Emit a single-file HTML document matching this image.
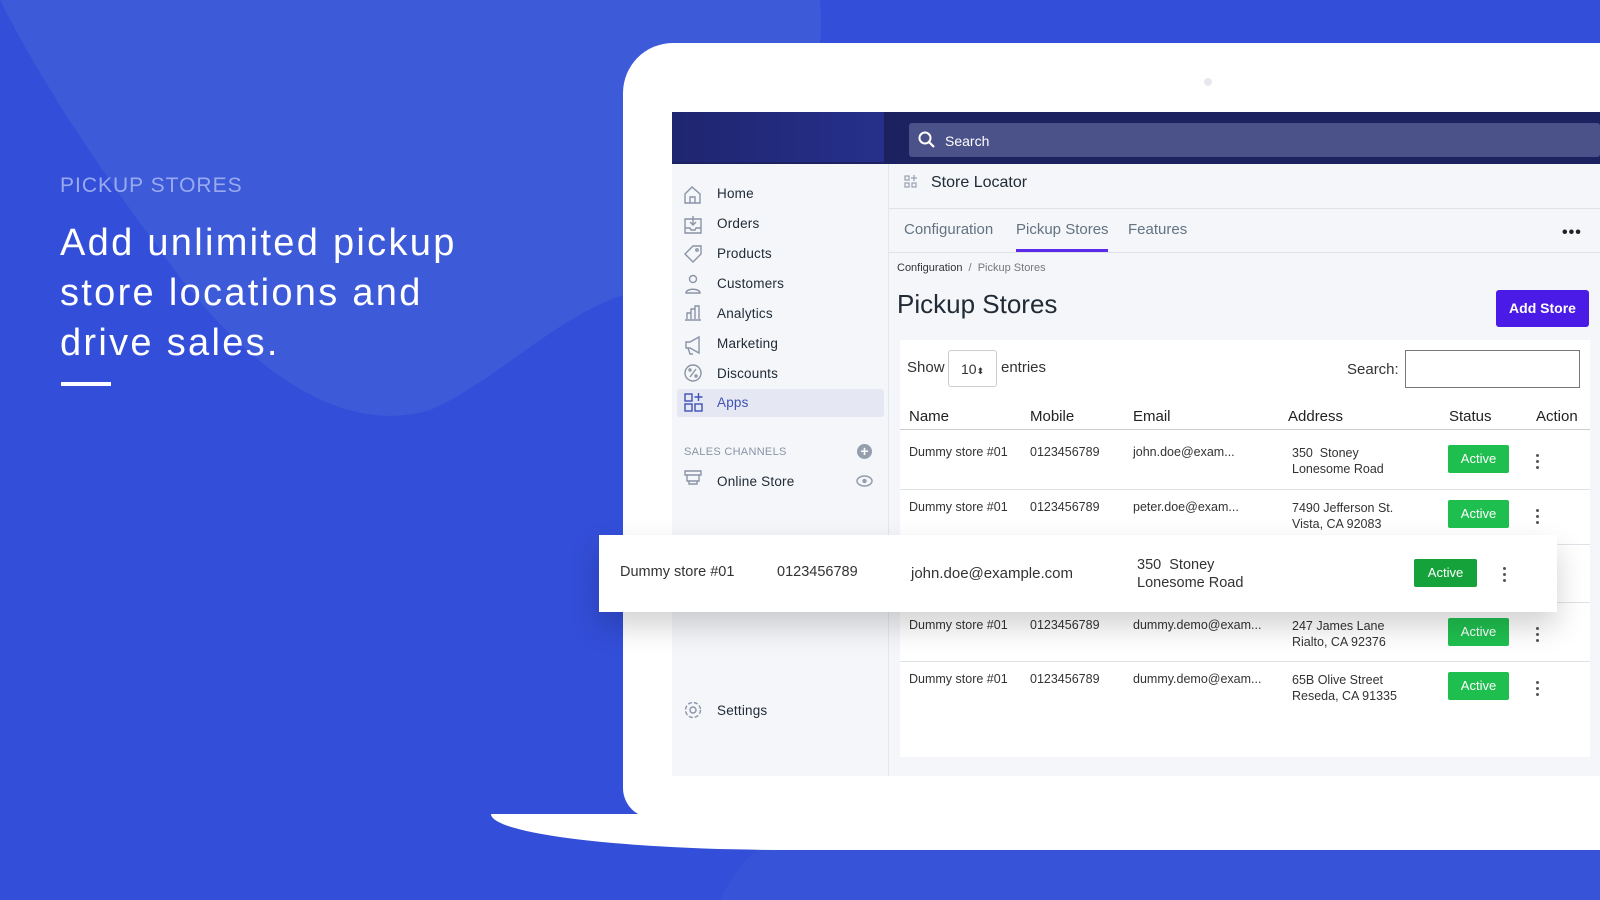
<!DOCTYPE html>
<html><head><meta charset="utf-8"><style>
*{margin:0;padding:0;box-sizing:border-box}
body{width:1600px;height:900px;overflow:hidden;background:#334ed8;font-family:"Liberation Sans",sans-serif;position:relative}
.abs{position:absolute}
.sb{font-size:13.5px;color:#212b36;letter-spacing:0.2px}
.cell{position:absolute;font-size:12.5px;color:#333}
.act{position:absolute;width:61px;height:28px;background:#1fbf4f;color:#fff;font-size:13px;text-align:center;line-height:28px;border-radius:2px}
.dots{position:absolute;width:3px}
.dots i{display:block;width:3px;height:3px;border-radius:50%;background:#555;margin-bottom:3px}
.sep{position:absolute;left:900px;width:690px;height:1px;background:#dfe3e8}
</style></head><body>
<svg class="abs" style="left:0;top:0" width="1600" height="900">
<path d="M0 0 L820 0 C830 120 760 260 640 290 C560 310 500 380 430 410 C330 440 230 350 160 250 C100 170 40 80 0 0Z" fill="#3d5ad9"/>
<path d="M720 900 C740 860 760 840 800 830 L1600 830 L1600 900Z" fill="#3a56d8" opacity="0.6"/>
</svg>
<div class="abs" style="left:60px;top:174px;font-size:21px;color:#9aaaf0;letter-spacing:1px">PICKUP STORES</div>
<div class="abs" style="left:60px;top:218px;font-size:38px;line-height:50px;color:#fff;letter-spacing:2.3px">Add unlimited pickup<br>store locations and<br>drive sales.</div>
<div class="abs" style="left:61px;top:382px;width:50px;height:4px;background:#fff"></div>
<div class="abs" style="left:491px;top:814px;width:1109px;height:36px;background:#fff;border-radius:0 0 0 300px/0 0 0 36px"></div>
<div class="abs" style="left:623px;top:43px;width:1000px;height:775px;background:#fff;border-radius:50px 0 0 30px"></div>
<div class="abs" style="left:1204px;top:78px;width:8px;height:8px;border-radius:50%;background:#e6e8ee"></div>
<div class="abs" style="left:672px;top:112px;width:928px;height:664px;background:#f4f6fa"></div>
<div class="abs" style="left:672px;top:112px;width:928px;height:52px;background:#1c2260"></div>
<div class="abs" style="left:672px;top:112px;width:212px;height:50px;background:linear-gradient(90deg,#1f2570,#26308a)"></div>
<div class="abs" style="left:909px;top:123px;width:691px;height:34px;background:#4b5189;border-radius:3px"></div>
<svg class="abs" style="left:918px;top:131px" width="18" height="18"><circle cx="7" cy="7" r="5.5" stroke="#fff" stroke-width="2" fill="none"/><path d="M11 11l5 5" stroke="#fff" stroke-width="2.2"/></svg>
<div class="abs" style="left:945px;top:133px;font-size:14px;color:#fff">Search</div>
<div class="abs" style="left:677px;top:389px;width:207px;height:28px;background:#e5e8f3;border-radius:3px"></div>
<svg class="abs" style="left:682px;top:184px" width="22" height="540" fill="none" stroke="#8a94a6" stroke-width="1.4">
<path d="M3 10L10 3L18 10V19H3Z M8 19v-6h5v6"/>
<path d="M3 35h16v14H3z M11 32v9 M8 38l3 3 3-3 M3 44h5l1 2h4l1-2h5"/>
<path d="M3 70l8-8h8v8l-8 8z"/><circle cx="15" cy="66" r="1.2"/>
<circle cx="11" cy="95" r="3.5"/><path d="M4 109c0-5 14-5 14 0z"/>
<path d="M3 136h16 M5 135v-6h4v6 M9 135v-10h4v10 M13 135v-13h4v13"/>
<path d="M4 158h4l9-5v16l-9-5H4z M6 164l2 6h3"/>
<circle cx="11" cy="189" r="8"/><path d="M8 193l6-8"/><circle cx="8" cy="186" r="1"/><circle cx="14" cy="192" r="1"/>
<g stroke="#3f51b5"><rect x="3" y="210" width="7" height="7"/><rect x="3" y="220" width="7" height="7"/><rect x="13" y="220" width="7" height="7"/><path d="M16.5 209v8 M12.5 213h8"/></g>
<path d="M3 287h16v4H3z M5 291v6h12v-6 M7 297v3h8v-3"/>
<circle cx="11" cy="526" r="3"/><circle cx="11" cy="526" r="7.5" stroke-dasharray="4 2"/>
</svg>
<div class="abs sb" style="left:717px;top:186px">Home</div>
<div class="abs sb" style="left:717px;top:216px">Orders</div>
<div class="abs sb" style="left:717px;top:246px">Products</div>
<div class="abs sb" style="left:717px;top:276px">Customers</div>
<div class="abs sb" style="left:717px;top:306px">Analytics</div>
<div class="abs sb" style="left:717px;top:336px">Marketing</div>
<div class="abs sb" style="left:717px;top:366px">Discounts</div>
<div class="abs sb" style="left:717px;top:395px;color:#3f51b5">Apps</div>
<div class="abs" style="left:684px;top:446px;font-size:11px;color:#8a94a6;letter-spacing:0.3px">SALES CHANNELS</div>
<div class="abs" style="left:857px;top:444px;width:15px;height:15px;border-radius:50%;background:#959eae;color:#fff;font-size:14px;line-height:15px;text-align:center;font-weight:bold">+</div>
<div class="abs sb" style="left:717px;top:474px">Online Store</div>
<svg class="abs" style="left:856px;top:475px" width="17" height="12"><ellipse cx="8.5" cy="6" rx="7.5" ry="5" fill="none" stroke="#959eae" stroke-width="1.5"/><circle cx="8.5" cy="6" r="2.2" fill="#959eae"/></svg>
<div class="abs sb" style="left:717px;top:703px">Settings</div>
<div class="abs" style="left:888px;top:164px;width:1px;height:612px;background:#e3e6ec"></div>
<svg class="abs" style="left:904px;top:175px" width="14" height="14" fill="none" stroke="#98a0b0" stroke-width="1.2"><rect x="1" y="1" width="4" height="4"/><rect x="1" y="8" width="4" height="4"/><rect x="8" y="8" width="4" height="4"/><path d="M10 0v6M7 3h6"/></svg>
<div class="abs" style="left:931px;top:174px;font-size:16px;color:#212b36">Store Locator</div>
<div class="abs" style="left:889px;top:208px;width:711px;height:1px;background:#dfe3e8"></div>
<div class="abs" style="left:904px;top:221px;font-size:15px;color:#637381">Configuration</div>
<div class="abs" style="left:1016px;top:221px;font-size:15px;color:#637381">Pickup Stores</div>
<div class="abs" style="left:1128px;top:221px;font-size:15px;color:#637381">Features</div>
<div class="abs" style="left:1016px;top:249px;width:92px;height:3px;background:#5c2ae8"></div>
<div class="abs" style="left:889px;top:252px;width:711px;height:1px;background:#dfe3e8"></div>
<div class="abs" style="left:1562px;top:224px;font-size:16px;font-weight:bold;color:#222;letter-spacing:1px">•••</div>
<div class="abs" style="left:897px;top:262px;font-size:11px;color:#333">Configuration <span style="color:#777">&nbsp;/&nbsp; Pickup Stores</span></div>
<div class="abs" style="left:897px;top:289px;font-size:26px;color:#212b36">Pickup Stores</div>
<div class="abs" style="left:1496px;top:290px;width:93px;height:37px;background:#4a1ae6;border-radius:3px;color:#fff;font-size:14px;font-weight:bold;text-align:center;line-height:37px">Add Store</div>
<div class="abs" style="left:900px;top:340px;width:690px;height:417px;background:#fff"></div>
<div class="abs" style="left:907px;top:359px;font-size:15px;color:#333">Show</div>
<div class="abs" style="left:948px;top:350px;width:49px;height:37px;border:1px solid #ccc;border-radius:3px;font-size:14px;color:#333;line-height:36px;padding-left:12px">10<span style="font-size:9px">⬍</span></div>
<div class="abs" style="left:1001px;top:359px;font-size:15px;color:#333">entries</div>
<div class="abs" style="left:1347px;top:361px;font-size:15px;color:#333">Search:</div>
<div class="abs" style="left:1405px;top:350px;width:175px;height:38px;border:1px solid #777"></div>
<div class="abs" style="left:909px;top:408px;font-size:15px;color:#222">Name</div>
<div class="abs" style="left:1030px;top:408px;font-size:15px;color:#222">Mobile</div>
<div class="abs" style="left:1133px;top:408px;font-size:15px;color:#222">Email</div>
<div class="abs" style="left:1288px;top:408px;font-size:15px;color:#222">Address</div>
<div class="abs" style="left:1449px;top:408px;font-size:15px;color:#222">Status</div>
<div class="abs" style="left:1536px;top:408px;font-size:15px;color:#222">Action</div>
<div class="sep" style="top:429px;background:#ccc"></div>
<div class="sep" style="top:489px"></div>
<div class="sep" style="top:544px"></div>
<div class="sep" style="top:602px"></div>
<div class="sep" style="top:661px"></div>
<div class="cell" style="left:909px;top:445px">Dummy store #01</div><div class="cell" style="left:1030px;top:445px">0123456789</div><div class="cell" style="left:1133px;top:445px">john.doe@exam...</div><div class="cell" style="left:1292px;top:445px;line-height:16px">350&nbsp; Stoney<br>Lonesome Road</div><div class="act" style="left:1448px;top:445px">Active</div><div class="dots" style="left:1536px;top:454px"><i></i><i></i><i></i></div>
<div class="cell" style="left:909px;top:500px">Dummy store #01</div><div class="cell" style="left:1030px;top:500px">0123456789</div><div class="cell" style="left:1133px;top:500px">peter.doe@exam...</div><div class="cell" style="left:1292px;top:500px;line-height:16px">7490 Jefferson St.<br>Vista, CA 92083</div><div class="act" style="left:1448px;top:500px">Active</div><div class="dots" style="left:1536px;top:509px"><i></i><i></i><i></i></div>
<div class="cell" style="left:909px;top:618px">Dummy store #01</div><div class="cell" style="left:1030px;top:618px">0123456789</div><div class="cell" style="left:1133px;top:618px">dummy.demo@exam...</div><div class="cell" style="left:1292px;top:618px;line-height:16px">247 James Lane<br>Rialto, CA 92376</div><div class="act" style="left:1448px;top:618px">Active</div><div class="dots" style="left:1536px;top:627px"><i></i><i></i><i></i></div>
<div class="cell" style="left:909px;top:672px">Dummy store #01</div><div class="cell" style="left:1030px;top:672px">0123456789</div><div class="cell" style="left:1133px;top:672px">dummy.demo@exam...</div><div class="cell" style="left:1292px;top:672px;line-height:16px">65B Olive Street<br>Reseda, CA 91335</div><div class="act" style="left:1448px;top:672px">Active</div><div class="dots" style="left:1536px;top:681px"><i></i><i></i><i></i></div>
<div class="abs" style="left:599px;top:535px;width:958px;height:77px;background:#fff;box-shadow:0 14px 30px rgba(0,0,0,0.18)"></div>
<div class="cell" style="left:620px;top:564px;font-size:14.5px">Dummy store #01</div>
<div class="cell" style="left:777px;top:564px;font-size:14.5px">0123456789</div>
<div class="cell" style="left:911px;top:565px;font-size:15px">john.doe@example.com</div>
<div class="cell" style="left:1137px;top:556px;font-size:14.5px;line-height:18px">350&nbsp; Stoney<br>Lonesome Road</div>
<div class="act" style="left:1414px;top:559px;width:63px;background:#15a23a">Active</div>
<div class="dots" style="left:1503px;top:567px"><i></i><i></i><i></i></div>
</body></html>
